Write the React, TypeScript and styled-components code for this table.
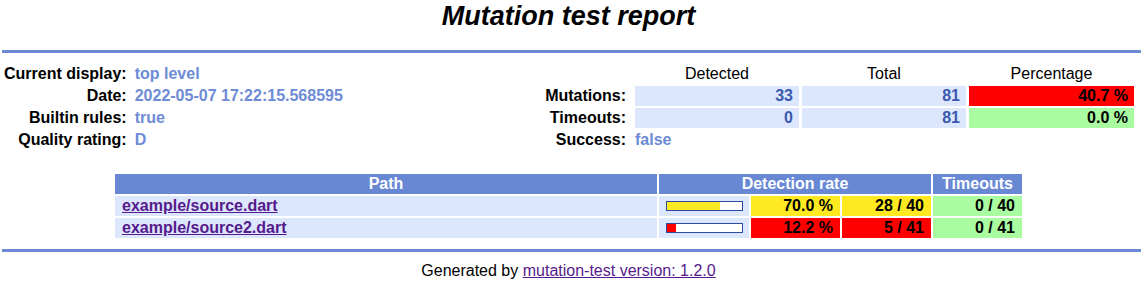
import { Fragment } from "react";
import styled, { createGlobalStyle } from "styled-components";

const GlobalStyle = createGlobalStyle`
  body {
    margin: 0;
    font-family: "Liberation Sans", Arial, sans-serif;
    font-size: 16px;
    color: #000;
    background: #fff;
  }
`

const Title = styled.h1`
  margin: 1px 6px 0 0;
  height: 30px;
  line-height: 30px;
  font-size: 27px;
  font-weight: bold;
  font-style: italic;
  text-align: center;
`

const Rule = styled.div<{ $top: number }>`
  height: 3px;
  margin: ${p => p.$top}px 2px 0 2px;
  background: #6a8ad5;
`

const Summary = styled.div`
  display: flex;
  justify-content: space-between;
  align-items: flex-start;
  margin-top: 11px;
  padding: 0 9px 0 4px;
`

const InfoGrid = styled.div`
  display: grid;
  grid-template-columns: auto auto;
  grid-auto-rows: 20px;
  column-gap: 8px;
  row-gap: 2px;
  line-height: 20px;
`

const Label = styled.div`
  font-weight: bold;
  text-align: right;
  white-space: nowrap;
`

const InfoValue = styled.div`
  font-weight: bold;
  color: #6d8bd6;
  white-space: nowrap;
`

const StatsGrid = styled.div`
  display: grid;
  grid-template-columns: auto 164px 164px 165px;
  grid-auto-rows: 20px;
  column-gap: 3px;
  row-gap: 2px;
  line-height: 20px;
`

const StatsLabel = styled(Label)`
  padding-right: 6px;
`

const ColumnHead = styled.div`
  text-align: center;
`

const NumberCell = styled.div<{ $bg?: string; $dark?: boolean }>`
  background: ${p => p.$bg ?? "#dce6fc"};
  color: ${p => (p.$dark ? "#000" : "#3b5aaf")};
  font-weight: bold;
  text-align: right;
  padding-right: 6px;
`

const FileTable = styled.div`
  display: grid;
  grid-template-columns: 542px 90px 89px 89px 89px;
  grid-auto-rows: 20px;
  gap: 2px;
  justify-content: center;
  margin-top: 24px;
  padding-right: 6px;
  line-height: 20px;
`

const HeadCell = styled.div<{ $span?: number }>`
  grid-column: span ${p => p.$span ?? 1};
  background: #6888d4;
  color: #fff;
  font-weight: bold;
  text-align: center;
`

const PathCell = styled.div`
  background: #dce6fc;
  padding-left: 7px;
`

const FileLink = styled.a`
  color: #551a8b;
  font-weight: bold;
  text-decoration: underline;
`

const BarCell = styled.div`
  background: #dce6fc;
  display: flex;
  align-items: center;
  padding-left: 7px;
`

const Bar = styled.div`
  width: 75px;
  height: 8px;
  border: 1px solid #2a4aa6;
  background: #fff;
`

const BarFill = styled.div<{ $color: string }>`
  height: 100%;
  background: ${p => p.$color};
`

const RateCell = styled.div<{ $bg: string }>`
  background: ${p => p.$bg};
  font-weight: bold;
  text-align: right;
  padding-right: 7px;
`

const Footer = styled.div`
  margin-top: 10px;
  padding-right: 6px;
  text-align: center;
  line-height: 18px;

  a {
    color: #551a8b;
  }
`

const YELLOW = "#ffe920"
const RED = "#ff0000"
const GREEN = "#a9fca0"

const info = [
    ["Current display:", "top level"],
    ["Date:", "2022-05-07 17:22:15.568595"],
    ["Builtin rules:", "true"],
    ["Quality rating:", "D"],
]

const files = [
    { path: "example/source.dart", found: 28, total: 40, timeouts: 0, color: YELLOW },
    { path: "example/source2.dart", found: 5, total: 41, timeouts: 0, color: RED },
]

export default function App() {
    return (
        <>
            <GlobalStyle/>
            <Title>Mutation test report</Title>
            <Rule $top={19}/>
            <Summary>
                <InfoGrid>
                    {info.map(([k, v]) => (
                        <Fragment key={k}>
                            <Label>{k}</Label>
                            <InfoValue>{v}</InfoValue>
                        </Fragment>
                    ))}
                </InfoGrid>
                <StatsGrid>
                    <div/>
                    <ColumnHead>Detected</ColumnHead>
                    <ColumnHead>Total</ColumnHead>
                    <ColumnHead>Percentage</ColumnHead>

                    <StatsLabel>Mutations:</StatsLabel>
                    <NumberCell>33</NumberCell>
                    <NumberCell>81</NumberCell>
                    <NumberCell $bg={RED} $dark>40.7 %</NumberCell>

                    <StatsLabel>Timeouts:</StatsLabel>
                    <NumberCell>0</NumberCell>
                    <NumberCell>81</NumberCell>
                    <NumberCell $bg={GREEN} $dark>0.0 %</NumberCell>

                    <StatsLabel>Success:</StatsLabel>
                    <InfoValue>false</InfoValue>
                </StatsGrid>
            </Summary>

            <FileTable>
                <HeadCell>Path</HeadCell>
                <HeadCell $span={3}>Detection rate</HeadCell>
                <HeadCell>Timeouts</HeadCell>
                {files.map(f => {
                    const rate = (f.found / f.total) * 100
                    return (
                        <Fragment key={f.path}>
                            <PathCell><FileLink href="#">{f.path}</FileLink></PathCell>
                            <BarCell>
                                <Bar><BarFill $color={f.color} style={{ width: `${rate}%` }}/></Bar>
                            </BarCell>
                            <RateCell $bg={f.color}>{rate.toFixed(1)} %</RateCell>
                            <RateCell $bg={f.color}>{f.found} / {f.total}</RateCell>
                            <RateCell $bg={GREEN}>{f.timeouts} / {f.total}</RateCell>
                        </Fragment>
                    )
                })}
            </FileTable>

            <Rule $top={11}/>
            <Footer>
                Generated by <a href="#">mutation-test version: 1.2.0</a>
            </Footer>
        </>
    )
}
